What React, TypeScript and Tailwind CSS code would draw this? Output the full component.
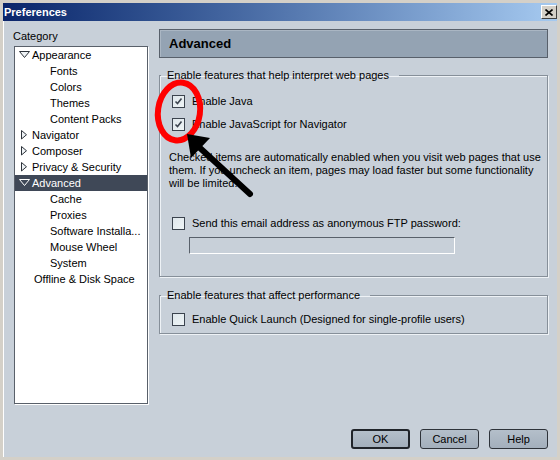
import React from "react";

type Node = { label: string; level: 0 | 1 | 2; icon?: "down" | "right"; selected?: boolean };

const tree: Node[] = [
  { label: "Appearance", level: 0, icon: "down" },
  { label: "Fonts", level: 1 },
  { label: "Colors", level: 1 },
  { label: "Themes", level: 1 },
  { label: "Content Packs", level: 1 },
  { label: "Navigator", level: 0, icon: "right" },
  { label: "Composer", level: 0, icon: "right" },
  { label: "Privacy & Security", level: 0, icon: "right" },
  { label: "Advanced", level: 0, icon: "down", selected: true },
  { label: "Cache", level: 1 },
  { label: "Proxies", level: 1 },
  { label: "Software Installa...", level: 1 },
  { label: "Mouse Wheel", level: 1 },
  { label: "System", level: 1 },
  { label: "Offline & Disk Space", level: 2 },
];

function Twisty({ dir, light }: { dir: "down" | "right"; light?: boolean }) {
  const stroke = light ? "#ffffff" : "#2c323a";
  const fill = light ? "#3f4857" : "#eef2f5";
  if (dir === "down")
    return (
      <svg width="11" height="8" viewBox="0 0 11 8" className="shrink-0">
        <polygon points="0.5,0.5 10.5,0.5 5.5,6.5" fill={fill} stroke={stroke} strokeWidth="1" />
      </svg>
    );
  return (
    <svg width="6" height="10" viewBox="0 0 6 10" className="ml-[2px] shrink-0">
      <polygon points="0.5,0.5 5.5,4.75 0.5,9" fill={fill} stroke={stroke} strokeWidth="1" />
    </svg>
  );
}

function CheckBox({ checked }: { checked?: boolean }) {
  return (
    <span className="w-[13px] h-[13px] shrink-0 border border-[#3b434e] bg-gradient-to-br from-[#dfe7ec] to-[#eef4f6] flex items-center justify-center">
      {checked && (
        <svg width="11" height="11" viewBox="0 0 11 11">
          <path d="M2.5 5.5 L4.5 7.5 L8.5 2.5" fill="none" stroke="#3c4450" strokeWidth="1.6" />
        </svg>
      )}
    </span>
  );
}

function Row({ checked, children }: { checked?: boolean; children: React.ReactNode }) {
  return (
    <div className="flex items-center gap-[7px] h-[13px] ml-[3px]">
      <CheckBox checked={checked} />
      <span className="leading-[13px] whitespace-nowrap">{children}</span>
    </div>
  );
}

function Btn({ children, primary }: { children: React.ReactNode; primary?: boolean }) {
  return (
    <button
      className={
        "w-[59px] h-[20px] rounded-[3px] bg-gradient-to-b from-[#b4bfca] to-[#a3afbc] text-[11px] text-black flex items-center justify-center " +
        (primary ? "border-2 border-[#20242a]" : "border border-[#2e333a]")
      }
    >
      {children}
    </button>
  );
}

export default function App() {
  return (
    <div className="relative w-[560px] h-[460px] bg-[#d4d0c8] p-[3px] font-['Liberation_Sans',Arial,sans-serif] text-[11px] text-black">
      <div className="flex flex-col h-full bg-[#c8d0d9] shadow-[inset_1px_0_0_#ffffff]">
        {/* title bar */}
        <div className="h-[18px] bg-gradient-to-r from-[#0a246a] to-[#a6caf0] flex items-center justify-between pl-[1px]">
          <span className="font-bold text-white text-[11px] leading-[13px]">Preferences</span>
          <span className="w-[16px] h-[14px] bg-[#d4d0c8] border border-t-white border-l-white border-r-[#404040] border-b-[#404040] flex items-center justify-center">
            <svg width="8" height="7" viewBox="0 0 8 7">
              <path d="M0.5 0.5 L7.5 6.5 M7.5 0.5 L0.5 6.5" stroke="#000" strokeWidth="1.6" />
            </svg>
          </span>
        </div>

        {/* body */}
        <div className="flex-1 flex flex-col">
          <div className="flex">
            {/* categories */}
            <div className="pl-[11px] pt-[9px] w-[145px]">
              <div className="leading-[13px] mb-[3px] -ml-[1px]">Category</div>
              <div className="w-[134px] h-[358px] bg-white border border-[#59606a] shadow-[1px_1px_0_#ffffff]">
                {tree.map((n) => (
                  <div
                    key={n.label}
                    className={
                      "h-[16px] flex items-center whitespace-nowrap " +
                      (n.selected ? "bg-[#3f4857] text-white " : "") +
                      (n.level === 0 ? "pl-[4px]" : n.level === 1 ? "pl-[35px]" : "pl-[19px]")
                    }
                  >
                    {n.level === 0 && (
                      <span className="w-[13px] flex items-center shrink-0">
                        <Twisty dir={n.icon!} light={n.selected} />
                      </span>
                    )}
                    <span className="leading-[13px]">{n.label}</span>
                  </div>
                ))}
              </div>
            </div>

            {/* panel */}
            <div className="ml-[11px] pt-[8px] w-[389px]">
              <div className="h-[29px] bg-[#94a3b3] border border-[#58606b] shadow-[inset_1px_1px_0_#aab6c3] flex items-center pl-[9px]">
                <span className="font-bold text-[13px] leading-[15px] text-black">Advanced</span>
              </div>

              <fieldset className="mt-[11px] border border-[#868f99] shadow-[1px_1px_0_#eef2f6,inset_1px_1px_0_#eef2f6] min-w-0">
                <legend className="ml-[1px] pl-[6px] pr-[10px] leading-[13px]">Enable features that help interpret web pages</legend>
                <div className="pl-[9px] pb-[22px]">
                  <div className="pt-[13px] flex flex-col gap-[10px]">
                    <Row checked>Enable Java</Row>
                    <Row checked>Enable JavaScript for Navigator</Row>
                  </div>
                  <p className="mt-[20px] leading-[13px] w-[376px]">
                    Checked items are automatically enabled when you visit web pages that use them. If you uncheck an item, pages may load faster but some functionality will be limited.
                  </p>
                  <div className="mt-[27px]">
                    <Row>Send this email address as anonymous FTP password:</Row>
                  </div>
                  <div className="mt-[7px] ml-[20px] w-[266px] h-[17px] border border-t-[#59616b] border-l-[#59616b] border-r-white border-b-white bg-[#c8d0d9]" />
                </div>
              </fieldset>

              <fieldset className="mt-[12px] border border-[#868f99] shadow-[1px_1px_0_#eef2f6,inset_1px_1px_0_#eef2f6] min-w-0">
                <legend className="ml-[1px] pl-[6px] pr-[10px] leading-[13px]">Enable features that affect performance</legend>
                <div className="pl-[9px] pt-[11px] pb-[7px]">
                  <Row>Enable Quick Launch (Designed for single-profile users)</Row>
                </div>
              </fieldset>
            </div>
          </div>

          <div className="mt-auto flex justify-end gap-[10px] pr-[9px] pb-[8px]">
            <Btn primary>OK</Btn>
            <Btn>Cancel</Btn>
            <Btn>Help</Btn>
          </div>
        </div>
      </div>

      {/* annotation drawn on top of the screenshot */}
      <svg className="absolute inset-0 pointer-events-none" width="560" height="460" viewBox="0 0 560 460">
        <ellipse cx="179" cy="111.5" rx="21" ry="29" transform="rotate(8 179 111.5)" fill="none" stroke="#ff0000" strokeWidth="6" />
        <line x1="250" y1="194" x2="200" y2="148" stroke="#000" strokeWidth="6" strokeLinecap="round" />
        <polygon points="187,134 210,138 191,158" fill="#000" />
      </svg>
    </div>
  );
}
